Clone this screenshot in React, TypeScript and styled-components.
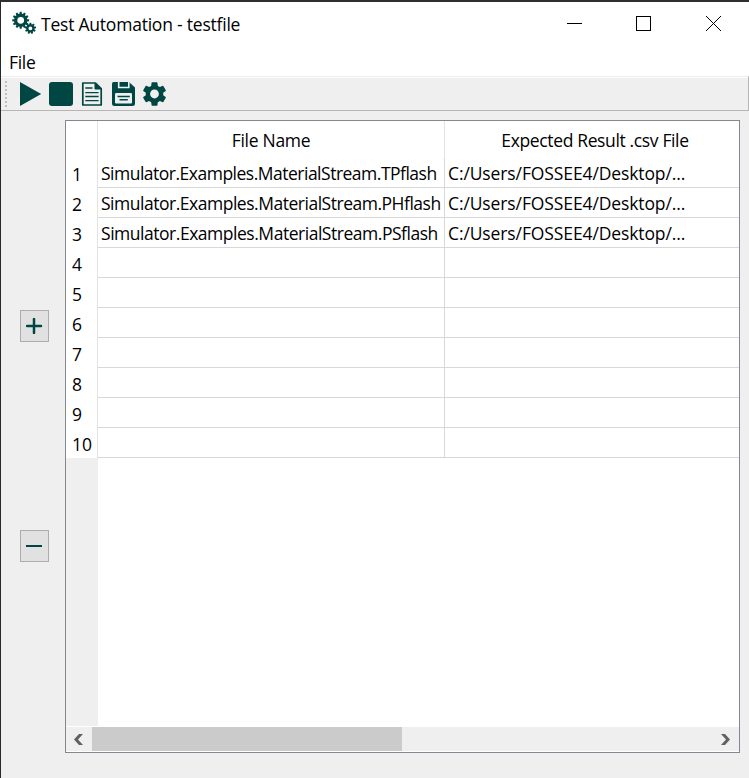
import React from "react";
import styled, { createGlobalStyle } from "styled-components";

const TEAL = "#004744";

const GlobalStyle = createGlobalStyle`
  * { box-sizing: border-box; }
  html, body { margin: 0; padding: 0; background: #efefef; }
  body { font-family: "Open Sans", "Noto Sans", sans-serif; font-size: 17.5px; color: #000; overflow: hidden; }
`;

const Window = styled.div`
  width: 749px;
  height: 778px;
  display: flex;
  flex-direction: column;
  background: #efefef;
  border-left: 1px solid #2a2729;
  border-top: 2px solid #302f31;
`;

const TitleBar = styled.header`
  height: 46px;
  flex: none;
  display: flex;
  background: #fff;
  padding-left: 11px;
`;

const AppIcon = styled.svg`
  width: 26px;
  height: 26px;
  margin-top: 8px;
  flex: none;
`;

const Label = styled.span<{ $spacing?: number }>`
  letter-spacing: ${(p) => p.$spacing ?? 0}px;
  white-space: pre;
`;

const Title = styled.div`
  line-height: 24px;
  padding: 10px 0 0 3px;
  flex: 1;
`;

const WindowButton = styled.button`
  width: 70px;
  height: 42px;
  padding: 0;
  border: 0;
  background: none;
  display: grid;
  place-items: center;

  &:nth-of-type(2) {
    width: 69px;
  }

  &:nth-of-type(3) {
    width: 71px;
  }
`;

const MenuBar = styled.nav`
  height: 28px;
  flex: none;
  background: #fff;
  padding-left: 8px;
  line-height: 28px;
`;

const ToolBar = styled.div`
  height: 35px;
  flex: none;
  border-top: 1px solid #eee;
  border-right: 1px solid #b6b6b6;
  border-bottom: 1px solid #b6b6b6;
  box-shadow: inset 0 1px #fff;
  display: flex;
  padding: 5px 0 0 4px;
`;

const Grip = styled.div`
  width: 2px;
  height: 26px;
  margin: -1px 11px 0 0;
  background: repeating-linear-gradient(#bdbdbd 0 2px, transparent 2px 4px);
`;

const ToolButton = styled.button`
  width: 31px;
  height: 24px;
  border: 0;
  padding: 0;
  background: none;
  display: flex;
  flex: none;
`;

const Body = styled.main`
  flex: 1;
  display: flex;
  padding: 9px 9px 25px 0;
  min-height: 0;
`;

const SideBar = styled.aside`
  width: 64px;
  flex: none;
  display: flex;
  flex-direction: column;
  align-items: flex-start;
  padding: 190px 0 0 19px;
  gap: 188px;
`;

const SideButton = styled.button`
  width: 29px;
  height: 32px;
  border: 1px solid #adadad;
  background: #e1e1e1;
  padding: 0;
  display: grid;
  place-items: center;
`;

const TableFrame = styled.section`
  width: 675px;
  height: 633px;
  flex: none;
  border: 1px solid #828790;
  background: #fff;
  display: flex;
  flex-direction: column;
`;

const Grid = styled.div`
  display: grid;
  grid-template-columns: 32px 347px 294px;
  grid-template-rows: 37px repeat(10, 30px) 268px;
  flex: none;
`;

const Header = styled.div<{ $line?: boolean }>`
  border-right: ${(p) => (p.$line ? "1px solid #e3e3e3" : "0")};
  display: flex;
  justify-content: center;
  line-height: 24px;
  padding-top: 7px;
  padding-left: ${(p) => (p.$line ? 0 : 6)}px;
`;

const Index = styled.div`
  border-right: 1px solid #e3e3e3;
  padding-left: 6px;
  line-height: 33px;
  height: 30px;
`;

const Cell = styled.div<{ $line?: boolean }>`
  border-bottom: 1px solid #d8d8d8;
  border-right: ${(p) => (p.$line ? "1px solid #d8d8d8" : "0")};
  padding-left: 3px;
  line-height: 30px;
  height: 30px;
  min-width: 0;
`;

const EmptyIndex = styled.div`
  background: #efefef;
`;

const ScrollBar = styled.div`
  height: 24px;
  margin-top: 1px;
  background: #efefef;
  display: flex;
`;

const ScrollArrow = styled.svg`
  width: 26px;
  height: 24px;
  flex: none;
`;

const ScrollTrack = styled.div`
  flex: 1;
`;

const ScrollThumb = styled.div`
  width: 310px;
  height: 24px;
  background: #cbcbcb;
`;

function cog(cx: number, cy: number, outer: number, inner: number, teeth: number) {
  const pts: string[] = [];
  const step = (Math.PI * 2) / teeth;
  for (let i = 0; i < teeth; i++) {
    const a = i * step - Math.PI / 2;
    [
      [-0.34, inner],
      [-0.22, outer],
      [0.22, outer],
      [0.34, inner],
    ].forEach(([f, r]) => {
      pts.push(`${(cx + r * Math.cos(a + f * step)).toFixed(2)} ${(cy + r * Math.sin(a + f * step)).toFixed(2)}`);
    });
  }
  return `M${pts.join("L")}Z`;
}

function ring(cx: number, cy: number, r: number) {
  return `M${cx - r} ${cy}a${r} ${r} 0 1 0 ${2 * r} 0a${r} ${r} 0 1 0 ${-2 * r} 0Z`;
}

const files = [
  { name: "Simulator.Examples.MaterialStream.TPflash", spacing: -0.5 },
  { name: "Simulator.Examples.MaterialStream.PHflash", spacing: -0.48 },
  { name: "Simulator.Examples.MaterialStream.PSflash", spacing: -0.47 },
];

export default function App() {
  return (
    <>
      <GlobalStyle />
      <Window>
        <TitleBar>
          <AppIcon viewBox="0 0 26 26" fill={TEAL} fillRule="evenodd">
            <path d={cog(8.7, 10.3, 8.5, 6.6, 12) + ring(8.7, 10.3, 3.4)} />
            <path d={cog(18.4, 18.3, 5.7, 4.2, 9) + ring(18.4, 18.3, 1.9)} />
          </AppIcon>
          <Title>
            <Label $spacing={-0.22}>Test Automation - testfile</Label>
          </Title>
          <WindowButton aria-label="Minimize">
            <svg width="15" height="15">
              <path d="M0 7.5H15" stroke="#000" />
            </svg>
          </WindowButton>
          <WindowButton aria-label="Maximize">
            <svg width="15" height="15">
              <rect x=".5" y=".5" width="14" height="14" fill="none" stroke="#000" />
            </svg>
          </WindowButton>
          <WindowButton aria-label="Close">
            <svg width="15" height="15">
              <path d="M0 0L15 15M15 0L0 15" stroke="#000" />
            </svg>
          </WindowButton>
        </TitleBar>
        <MenuBar>
          <Label $spacing={-0.3}>File</Label>
        </MenuBar>
        <ToolBar>
          <Grip />
          <ToolButton aria-label="Run">
            <svg width="24" height="24" viewBox="0 0 24 24">
              <path d="M2 0L23.2 12L2 24Z" fill={TEAL} />
            </svg>
          </ToolButton>
          <ToolButton aria-label="Stop">
            <svg width="24" height="24" viewBox="0 0 24 24">
              <rect width="24" height="24" rx="3" fill={TEAL} />
            </svg>
          </ToolButton>
          <ToolButton aria-label="Report">
            <svg width="24" height="24" viewBox="0 0 24 24" fill="none" stroke={TEAL}>
              <path d="M2.8 1H15.5L21.2 6.5V23H2.8Z" strokeWidth="1.7" strokeLinejoin="round" />
              <path d="M15 1V7H21Z" fill={TEAL} strokeWidth="1" />
              <path d="M5.3 6H12.5M5.3 10.6H18.6M5.3 14.5H18.6M5.3 18.6H18.6" strokeWidth="1.4" />
            </svg>
          </ToolButton>
          <ToolButton aria-label="Save">
            <svg width="24" height="24" viewBox="0 0 24 24">
              <path d="M2.5 0H18L24 5.5V21.5Q24 24 21.5 24H3.5Q1 24 1 21.5V2Q1 0 2.5 0Z" fill={TEAL} />
              <path d="M7.7 0V5.5H17.8V0" fill="none" stroke="#efefef" strokeWidth="1.6" />
              <rect x="4" y="11" width="17" height="10.5" rx="1.3" fill="#efefef" />
              <path d="M6.5 14.4H18.8M8.5 17.7H16.8" stroke={TEAL} strokeWidth="1.5" />
            </svg>
          </ToolButton>
          <ToolButton aria-label="Settings">
            <svg width="24" height="24" viewBox="0 0 24 24">
              <path
                transform="translate(12.5 12) scale(1.22) translate(-12 -12)"
                fill={TEAL}
                d="M19.14 12.94c.04-.3.06-.61.06-.94 0-.32-.02-.64-.07-.94l2.03-1.58a.49.49 0 0 0 .12-.61l-1.92-3.32a.488.488 0 0 0-.59-.22l-2.39.96c-.5-.38-1.03-.7-1.62-.94l-.36-2.54a.484.484 0 0 0-.48-.41h-3.84c-.24 0-.43.17-.47.41l-.36 2.54c-.59.24-1.13.57-1.62.94l-2.39-.96c-.22-.08-.47 0-.59.22L2.74 8.87c-.12.21-.08.47.12.61l2.03 1.58c-.05.3-.09.63-.09.94s.02.64.07.94l-2.03 1.58a.49.49 0 0 0-.12.61l1.92 3.32c.12.22.37.29.59.22l2.39-.96c.5.38 1.03.7 1.62.94l.36 2.54c.05.24.24.41.48.41h3.84c.24 0 .44-.17.47-.41l.36-2.54c.59-.24 1.13-.56 1.62-.94l2.39.96c.22.08.47 0 .59-.22l1.92-3.32c.12-.22.07-.47-.12-.61l-2.01-1.58zM12 15.6c-1.98 0-3.6-1.62-3.6-3.6s1.62-3.6 3.6-3.6 3.6 1.62 3.6 3.6-1.62 3.6-3.6 3.6z"
              />
            </svg>
          </ToolButton>
        </ToolBar>
        <Body>
          <SideBar>
            <SideButton aria-label="Add row">
              <svg width="17" height="16" viewBox="0 0 17 16">
                <path d="M1 8H15M8 1V15" stroke={TEAL} strokeWidth="2.5" strokeLinecap="round" />
              </svg>
            </SideButton>
            <SideButton aria-label="Remove row">
              <svg width="17" height="16" viewBox="0 0 17 16">
                <path d="M0 8H16" stroke={TEAL} strokeWidth="2" />
              </svg>
            </SideButton>
          </SideBar>
          <TableFrame>
            <Grid>
              <Header $line />
              <Header $line>
                <Label $spacing={-0.3}>File Name</Label>
              </Header>
              <Header>
                <Label $spacing={-0.36}>Expected Result .csv File</Label>
              </Header>
              {Array.from({ length: 10 }, (_, i) => (
                <React.Fragment key={i}>
                  <Index>{i + 1}</Index>
                  <Cell $line>{files[i] && <Label $spacing={files[i].spacing}>{files[i].name}</Label>}</Cell>
                  <Cell>{files[i] && <Label $spacing={-0.11}>C:/Users/FOSSEE4/Desktop/...</Label>}</Cell>
                </React.Fragment>
              ))}
              <EmptyIndex />
            </Grid>
            <ScrollBar>
              <ScrollArrow viewBox="0 0 26 24">
                <path d="M13 7H17L12 12.5L17 18H13L8 12.5Z" fill="#606060" />
              </ScrollArrow>
              <ScrollTrack>
                <ScrollThumb />
              </ScrollTrack>
              <ScrollArrow viewBox="0 0 26 24">
                <path d="M8 7H12L17 12.5L12 18H8L13 12.5Z" fill="#606060" />
              </ScrollArrow>
            </ScrollBar>
          </TableFrame>
        </Body>
      </Window>
    </>
  );
}
